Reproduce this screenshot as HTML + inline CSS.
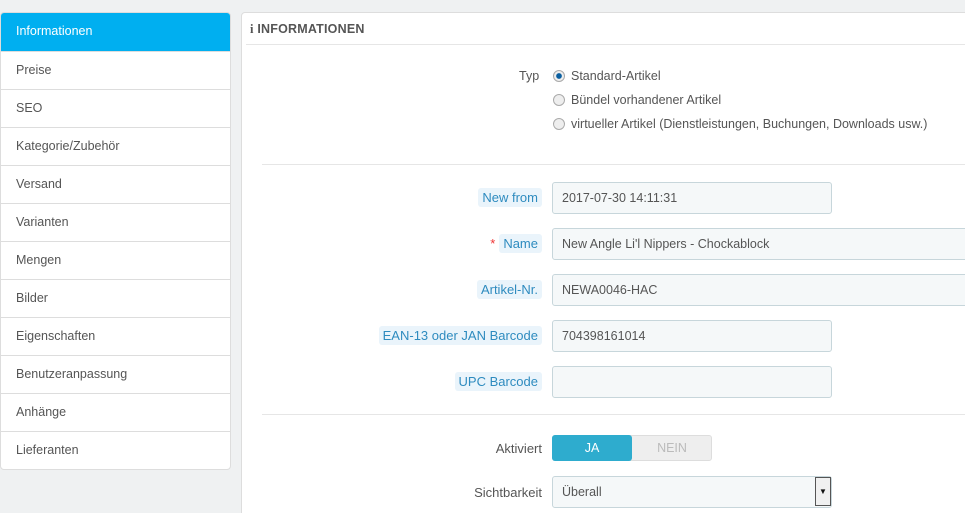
<!DOCTYPE html><html><head><style>
html,body{margin:0;width:965px;height:513px;overflow:hidden}
body{background:#eff1f2;font-family:"Liberation Sans",sans-serif;font-size:12.5px;color:#555;position:relative}
.a{position:absolute}
.side{left:0;top:12px;width:231px;box-sizing:border-box;background:#fff;border:1px solid #ddd;border-radius:4px;overflow:hidden}
.side div{height:37px;line-height:37px;padding-left:15px;border-top:1px solid #ddd;color:#555}
.side div:first-child{border-top:none;background:#00aff0;color:#fff;height:38px}
.panel{left:241px;top:12px;width:740px;height:510px;background:#fff;border:1px solid #ddd;border-radius:4px}
.hd{left:250px;top:22px;font-weight:bold;color:#555;font-size:12.5px;letter-spacing:0.2px}
.hl{height:1px;background:#e6e6e6}
.lab{right:423px;font-size:13px}
.lb{background:#eaf4fb;color:#2e8bbf;padding:2px 4px;border-radius:3px}
.in{left:552px;width:280px;height:32px;border:1px solid #c7d6db;background:#f5f8f9;border-radius:3px;line-height:30px;padding-left:9px;box-sizing:border-box;color:#555}
.r{width:10px;height:10px;border:1px solid #aaa;border-radius:50%;background:#eee;left:553px}
</style></head><body>
<div class="a side"><div>Informationen</div><div>Preise</div><div>SEO</div><div>Kategorie/Zubehör</div><div>Versand</div><div>Varianten</div><div>Mengen</div><div>Bilder</div><div>Eigenschaften</div><div>Benutzeranpassung</div><div>Anhänge</div><div>Lieferanten</div></div>
<div class="a panel"></div>
<div class="a hd"><span style="font-family:'Liberation Serif',serif">i</span> INFORMATIONEN</div>
<div class="a hl" style="left:246px;top:44px;width:719px"></div>
<div class="a" style="left:519px;top:69px">Typ</div>
<div class="a r" style="top:70px;background:radial-gradient(#0a5fa0 35%,#eee 45%)"></div><div class="a" style="left:571px;top:69px">Standard-Artikel</div>
<div class="a r" style="top:94px"></div><div class="a" style="left:571px;top:93px">Bündel vorhandener Artikel</div>
<div class="a r" style="top:118px"></div><div class="a" style="left:571px;top:117px">virtueller Artikel (Dienstleistungen, Buchungen, Downloads usw.)</div>
<div class="a hl" style="left:262px;top:164px;width:703px"></div>
<div class="a lab" style="top:190px"><span class="lb">New from</span></div>
<div class="a in" style="top:182px">2017-07-30 14:11:31</div>
<div class="a lab" style="top:236px"><span style="color:#e33;margin-right:4px">*</span><span class="lb">Name</span></div>
<div class="a in" style="top:228px;width:420px">New Angle Li'l Nippers - Chockablock</div>
<div class="a lab" style="top:282px"><span class="lb">Artikel-Nr.</span></div>
<div class="a in" style="top:274px;width:420px">NEWA0046-HAC</div>
<div class="a lab" style="top:328px"><span class="lb">EAN-13 oder JAN Barcode</span></div>
<div class="a in" style="top:320px">704398161014</div>
<div class="a lab" style="top:374px"><span class="lb">UPC Barcode</span></div>
<div class="a in" style="top:366px"></div>
<div class="a hl" style="left:262px;top:414px;width:703px"></div>
<div class="a lab" style="top:441px">Aktiviert</div>
<div class="a" style="left:552px;top:435px;width:160px;height:26px;border-radius:3px;background:#eee;border:1px solid #ddd;box-sizing:border-box"></div>
<div class="a" style="left:552px;top:435px;width:80px;height:26px;border-radius:3px;background:#2eacce;color:#fff;text-align:center;line-height:26px">JA</div>
<div class="a" style="left:632px;top:435px;width:80px;height:26px;color:#bbb;text-align:center;line-height:26px">NEIN</div>
<div class="a lab" style="top:485px">Sichtbarkeit</div>
<div class="a in" style="top:476px">Überall</div>
<div class="a" style="left:815px;top:477px;width:16px;height:29px;background:#f0f0f0;border:1px solid #555;box-sizing:border-box;font-size:8px;text-align:center;line-height:28px;color:#111">▼</div>
</body></html>
